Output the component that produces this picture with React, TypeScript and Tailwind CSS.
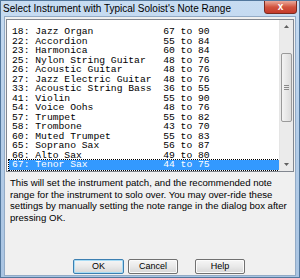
const rows: [string, string, string][] = [
  ["18", "Jazz Organ", "67 to 90"],
  ["22", "Accordion", "55 to 84"],
  ["23", "Harmonica", "60 to 84"],
  ["25", "Nylon String Guitar", "48 to 76"],
  ["26", "Acoustic Guitar", "48 to 76"],
  ["27", "Jazz Electric Guitar", "48 to 76"],
  ["33", "Acoustic String Bass", "36 to 55"],
  ["41", "Violin", "55 to 90"],
  ["54", "Voice Oohs", "48 to 76"],
  ["57", "Trumpet", "55 to 82"],
  ["58", "Trombone", "43 to 70"],
  ["60", "Muted Trumpet", "55 to 83"],
  ["65", "Soprano Sax", "56 to 87"],
  ["66", "Alto Sax", "49 to 80"],
  ["67", "Tenor Sax", "44 to 75"],
];

const Button = ({ label, primary }: { label: string; primary?: boolean }) => (
  <button
    type="button"
    className={
      "h-[15px] rounded-[2px] border bg-gradient-to-b from-[#f6f6f6] via-[#e9e9e9] to-[#d6d6d6] text-[9px] leading-none text-black " +
      (primary
        ? "w-[51px] border-[#3c7fb1] shadow-[inset_0_0_0_1px_#a8dcf5]"
        : "w-[50px] border-[#707070] shadow-[inset_0_0_0_1px_#fbfbfb]")
    }
  >
    {label}
  </button>
);

export default function App() {
  return (
    <div
      className="w-[300px] h-[278px] flex flex-col border border-[#52779d] bg-gradient-to-b from-[#c7dcf2] via-[#b4cde8] to-[#a9c4e2] overflow-hidden"
      style={{ fontFamily: '"Liberation Sans", Arial, sans-serif' }}
    >
      {/* title bar */}
      <div className="relative h-[15px] shrink-0">
        <span className="absolute left-[2px] top-[1px] text-[10px] leading-[13px] text-black">
          Select Instrument with Typical Soloist's Note Range
        </span>
        <div className="absolute right-[2px] top-[-1px] w-[33px] h-[14px] rounded-b-[3px] border border-[#7a2a1f] bg-gradient-to-b from-[#e9a99c] via-[#d1533e] to-[#c4392a] flex items-center justify-center">
          <span className="text-white text-[10px] font-bold leading-none">x</span>
        </div>
      </div>

      {/* client area */}
      <div className="flex-1 mx-[3px] mb-[1px] bg-[#f0f0f0] border border-[#93abc6] flex flex-col">
        <div className="mt-[2px] mx-[1px] h-[153px] border border-[#828790] bg-white flex">
          <div
            className="flex-1 pt-[7px] pl-[2px] text-[9.7px] leading-[9.5px] text-black"
            style={{ fontFamily: '"Liberation Mono", "Courier New", monospace' }}
          >
            {rows.map(([num, name, range], i) => {
              const sel = i === rows.length - 1;
              return (
                <div
                  key={num}
                  className={
                    "whitespace-pre pl-[3px] " +
                    (sel ? "bg-[#3399ff] text-white outline outline-1 outline-dotted outline-[#000000]" : "")
                  }
                >
                  {(num + ": " + name).padEnd(26) + range}
                </div>
              );
            })}
          </div>
          {/* scrollbar */}
          <div className="w-[14px] flex flex-col bg-[#ebebeb] border-l border-[#e5e5e5]">
            <div className="h-[13px] flex items-center justify-center">
              <svg width="5" height="3" viewBox="0 0 5 3">
                <path d="M0 3 L2.5 0 L5 3 Z" fill="#606060" />
              </svg>
            </div>
            <div className="h-[20px]" />
            <div className="mx-[1px] h-[69px] rounded-[2px] border border-[#9a9a9a] bg-gradient-to-r from-[#f4f4f4] to-[#dcdcdc] flex items-center justify-center">
              <div className="flex flex-col gap-[1px]">
                <div className="w-[5px] h-[1px] bg-[#8a8a8a]" />
                <div className="w-[5px] h-[1px] bg-[#8a8a8a]" />
                <div className="w-[5px] h-[1px] bg-[#8a8a8a]" />
              </div>
            </div>
            <div className="flex-1" />
            <div className="h-[13px] flex items-center justify-center">
              <svg width="5" height="3" viewBox="0 0 5 3">
                <path d="M0 0 L2.5 3 L5 0 Z" fill="#606060" />
              </svg>
            </div>
          </div>
        </div>

        <p className="mt-[5px] pl-[5px] pr-[2px] text-[9.6px] leading-[11.5px] text-black">
          This will set the instrument patch, and the recommended note range for the instrument to
          solo over. You may over-ride these settings by manually setting the note range in the
          dialog box after pressing OK.
        </p>

        <div className="mt-auto mb-[1px] ml-[68px] flex gap-[4px]">
          <Button label="OK" primary />
          <Button label="Cancel" />
          <div className="w-[9px]" />
          <Button label="Help" />
        </div>
      </div>
    </div>
  );
}
